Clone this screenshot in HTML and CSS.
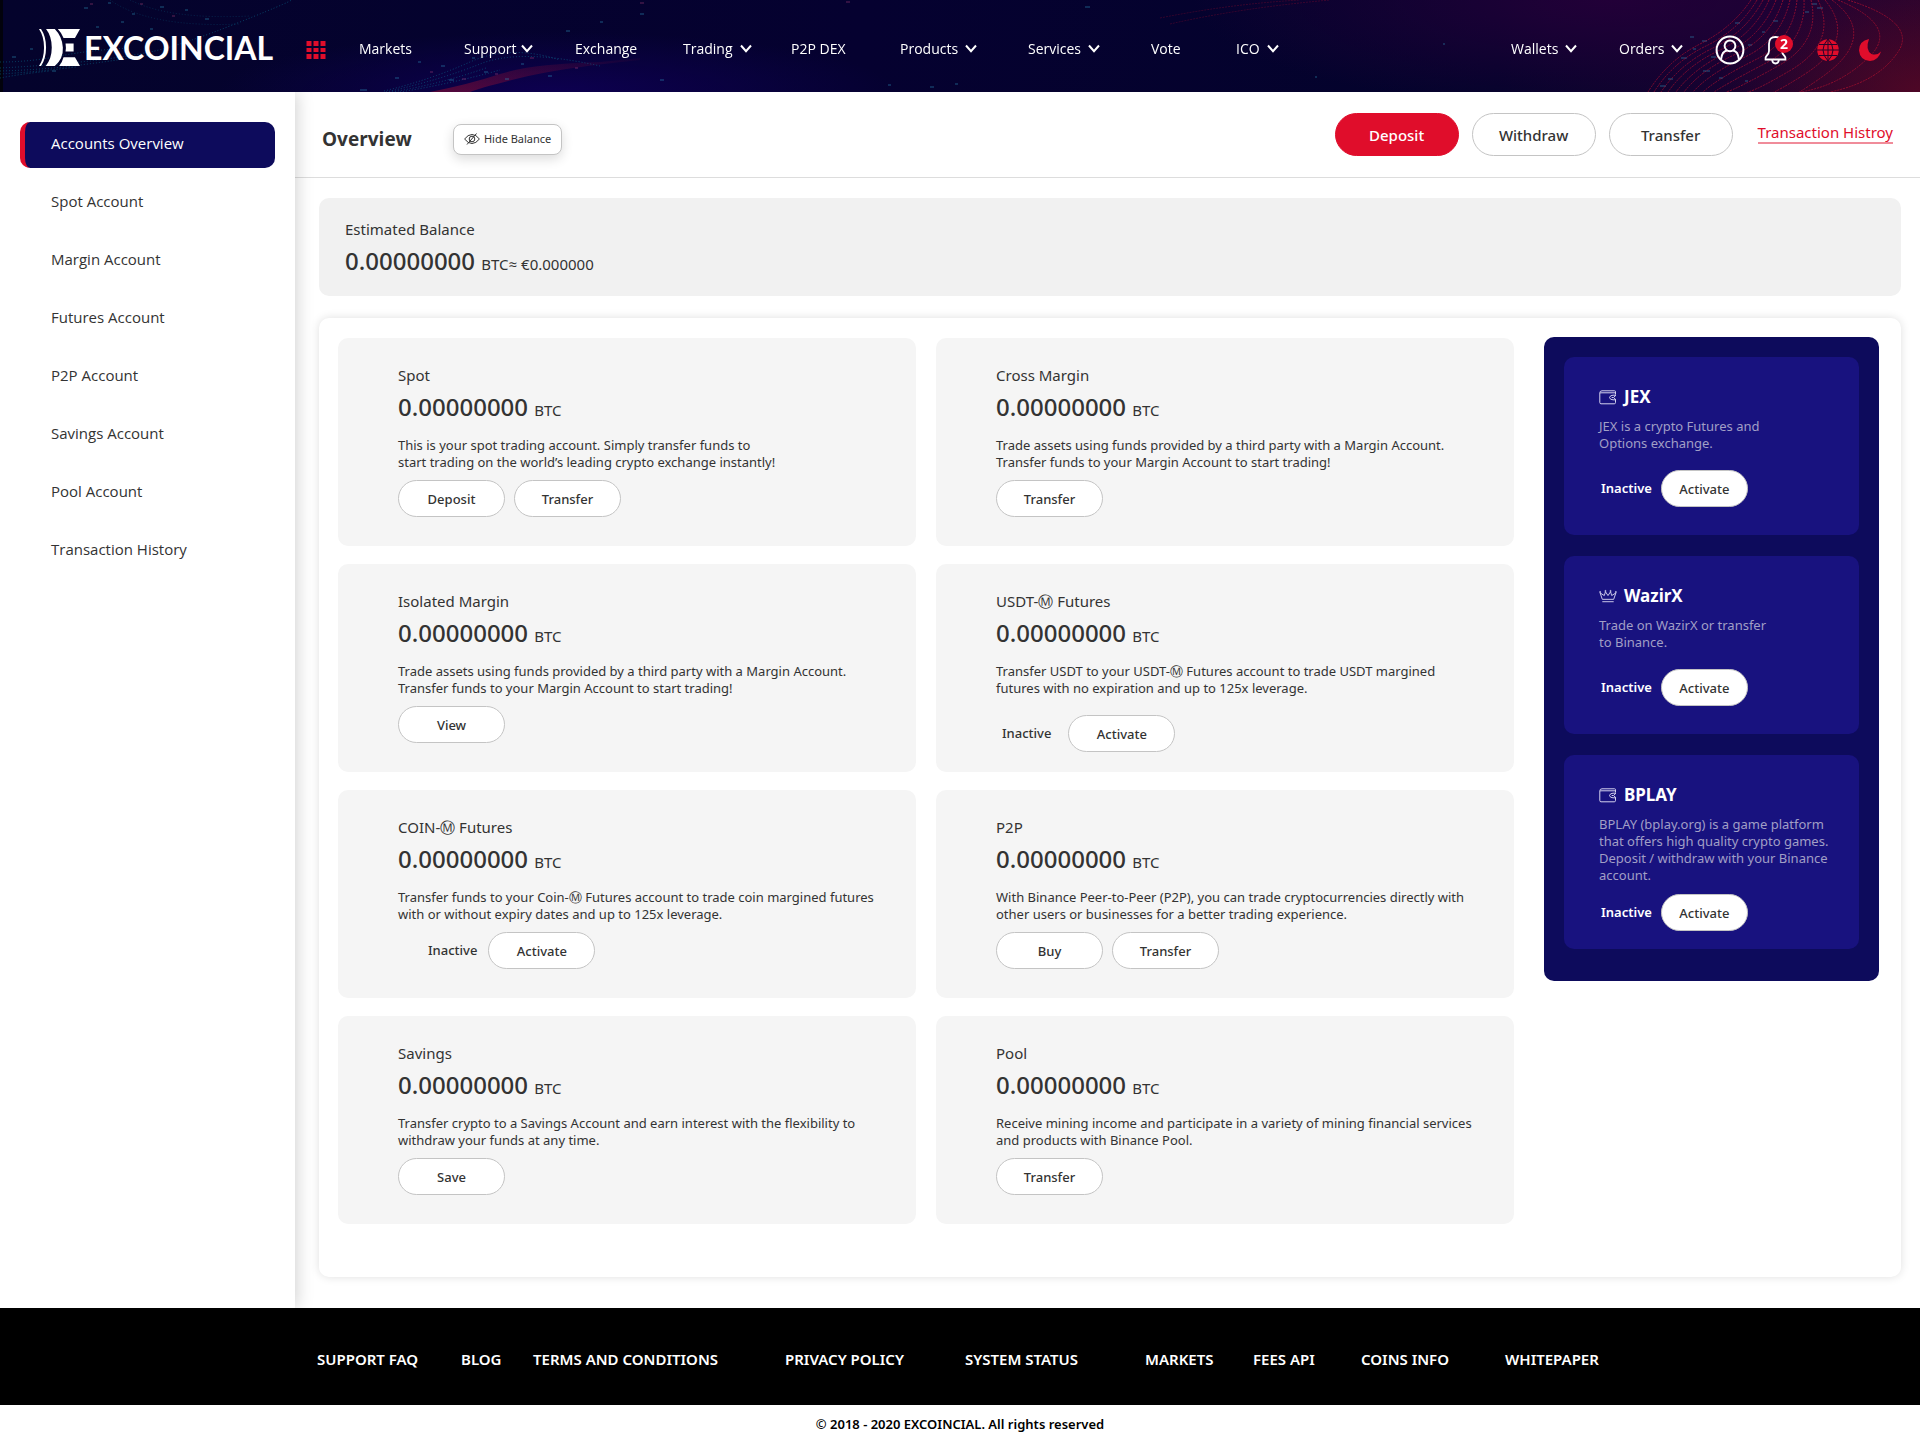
FILE: index.html
```html
<!DOCTYPE html>
<html lang="en">
<head>
<meta charset="utf-8">
<title>Excoincial - Accounts Overview</title>
<meta name="viewport" content="width=device-width, initial-scale=1">
<link rel="stylesheet" href="styles.css">
</head>
<body>
<svg width="0" height="0" class="defs" aria-hidden="true">
  <symbol id="chevron" viewBox="0 0 12 9"><path d="M1 1.5 6 7.2 11 1.5" fill="none" stroke="currentColor" stroke-width="2"/></symbol>
  <symbol id="wallet" viewBox="0 0 18 15">
    <path d="M16.5 4.5V1.5Q16.5.8 15.5.8H3Q.8.8.8 3V12.5Q.8 13.8 2 13.8H15.3Q16.5 13.8 16.5 12.5V10M1 3Q1.5 2.8 3 2.8H16.5M17 5.2H14Q11 5.3 10.5 7.5 11 9.8 14 9.8H17M17 5.2 14.5 7.5 17 9.8M12.7 7.5H14" fill="none" stroke="currentColor" stroke-width="1"/>
  </symbol>
</svg>

<header class="topbar">
  <svg class="topbar-art" viewBox="0 0 1920 92" preserveAspectRatio="xMidYMid slice" aria-hidden="true">
    <defs>
      <linearGradient id="flare" x1="0" x2="1" y1="1" y2="0"><stop offset="0" stop-color="#a01030" stop-opacity=".5"/><stop offset="1" stop-color="#a01030" stop-opacity=".05"/></linearGradient>
    </defs>
    <rect width="3" height="92" fill="#02020c"/>
    <path d="M430 92Q470 84 500 74T600 62L640 58V60Q560 68 520 78T470 92Z" fill="url(#flare)"/>
    <g fill="none" stroke="#0b7fa0" stroke-width="1" stroke-dasharray="1 2" opacity=".55">
      <path d="M0 68Q40 66 80 62T150 52 240 22 290 0"/><path d="M0 71Q40 70 80 65T155 54"/><path d="M0 74Q36 72 76 67"/><path d="M0 62Q30 62 60 56T130 48"/><path d="M0 78Q20 74 50 71"/>
      <path d="M384 91Q430 80 470 62T560 60"/><path d="M386 92Q440 80 480 64T600 66"/><path d="M392 92Q440 84 486 68"/><path d="M400 92Q450 84 500 70"/>
      <path d="M130 0Q170 20 250 16M110 0Q150 28 240 24" opacity=".5"/>
    </g>
    <g fill="none" stroke="#2f9fc4" stroke-width="1" opacity=".55">
      <path d="M84 8h4M108 3h3M132 14h3M160 7h4M121 22h3M185 10h3M96 27h3M205 19h4M150 29h3M12 57h4M30 49h3M52 71h4M360 90h7M395 78h4M418 62h3M441 66h4M449 80h5M472 58h3M484 72h4M505 79h4M521 64h3M548 76h4M566 31h4M600 22h3M640 14h4M660 80h4M1085 7h5M1315 77h2M1443 44h2M888 85h3M930 87h4M955 84h3"/>
      <path d="M1812 4h5M1817 8h6M1805 12h4M1735 23h5M1773 21h5M1702 41h5M1690 37h4M1748 45h4M1681 58h6M1703 71h7M1728 63h4M1668 79h5M1660 86h6M1745 81h3M1719 78h4M1693 49h3M1762 32h3M1711 57h5"/>
    </g>
    <g fill="none" stroke="#c24a80" stroke-width="1" opacity=".5"><path d="M90 4h3M172 16h3M140 4h3M430 72h3M462 79h4M495 74h3M530 58h4M575 68h3M640 3h4M846 2h4"/></g>
    <g fill="none" stroke="#c01430" stroke-width="1" stroke-dasharray="2 1" opacity=".65">
      <path d="M1751 0Q1732 28 1700 44T1648 92"/><path d="M1757 0Q1739 30 1706 46T1654 92"/><path d="M1763 0Q1746 32 1713 48T1661 92"/><path d="M1769 0Q1754 34 1720 50T1668 92"/><path d="M1776 0Q1762 36 1728 52T1676 92"/><path d="M1783 0Q1771 38 1736 54T1684 92"/><path d="M1790 0Q1781 40 1745 57T1693 92"/><path d="M1797 0Q1793 41 1755 60T1703 92"/><path d="M1804 0Q1806 42 1766 63T1714 92"/><path d="M1811 0Q1821 42 1778 66T1726 92"/><path d="M1818 0Q1838 42 1791 70T1740 92"/><path d="M1825 0Q1858 40 1805 74T1756 92"/><path d="M1832 0Q1880 36 1822 77T1776 92"/><path d="M1838 0Q1900 26 1870 56T1800 92"/><path d="M1848 0Q1918 22 1898 52T1830 92"/>
      <path d="M1160 18Q1230 4 1300 0" opacity=".4"/><path d="M1170 24Q1240 8 1330 0" opacity=".4"/>
    </g>
  </svg>

  <a href="#" class="logo">
    <svg viewBox="0 0 122 110" class="logo-mark" aria-hidden="true">
      <path fill="#fff" d="M0 0H6Q21 22 21 55T6 110H0Q15 88 15 55T0 0ZM21 0H47Q69 22 71 55T47 110H20Q38 88 38 55T21 0ZM56 0H122L107 27H73Q66 10 56 0ZM79 43H103V67H79Q81 55 79 43ZM73 84H107L122 110H60Q69 99 73 84Z"/>
    </svg>
    <span class="logo-text">EXCOINCIAL</span>
  </a>
  <button class="icon-btn apps" aria-label="Apps">
    <svg viewBox="0 0 19 18" aria-hidden="true"><path fill="#e00d2b" d="M0 0h5v5H0zM7 0h5v5H7zM14 0h5v5h-5zM0 7h5v4H0zM7 7h5v4H7zM14 7h5v4h-5zM0 13h5v5H0zM7 13h5v5H7zM14 13h5v5h-5z"/></svg>
  </button>
  <nav class="main-nav" aria-label="Main">
    <a href="#">Markets</a>
    <a href="#" class="tight">Support<svg class="chev"><use href="#chevron"/></svg></a>
    <a href="#">Exchange</a>
    <a href="#">Trading<svg class="chev"><use href="#chevron"/></svg></a>
    <a href="#">P2P DEX</a>
    <a href="#">Products<svg class="chev"><use href="#chevron"/></svg></a>
    <a href="#">Services<svg class="chev"><use href="#chevron"/></svg></a>
    <a href="#">Vote</a>
    <a href="#">ICO<svg class="chev"><use href="#chevron"/></svg></a>
    <a href="#">Wallets<svg class="chev"><use href="#chevron"/></svg></a>
    <a href="#">Orders<svg class="chev"><use href="#chevron"/></svg></a>
  </nav>
  <div class="tools">
    <button class="icon-btn user" aria-label="Profile">
      <svg viewBox="0 0 30 30" aria-hidden="true" fill="none" stroke="#fff" stroke-width="2"><circle cx="15" cy="15" r="13.4"/><circle cx="15" cy="10.8" r="5.4"/><path d="M6 24.5Q7 16 12 15.4M24 24.5Q23 16 18 15.4"/></svg>
    </button>
    <button class="icon-btn bell" aria-label="Notifications">
      <svg viewBox="0 0 24 30" aria-hidden="true" fill="none" stroke="#fff" stroke-width="1.8"><path d="M11.5 2Q5 2 5 9V16Q5 19 2.500 21 1 22.500 1.500 24.500H21.500Q22 22.500 20.500 21 18 19 18 16V9Q18 2 11.500 2Z"/><path d="M8.200 25Q8.500 28.500 11.500 28.500T14.800 25"/></svg>
      <span class="badge">2</span>
    </button>
    <button class="icon-btn globe" aria-label="Language">
      <svg viewBox="0 0 22 22" aria-hidden="true"><circle cx="11" cy="11" r="10.800" fill="#e00d2b"/><path d="M11 0V22M0 11H22M2 5.500H20M2 16.500H20M11 0Q1 11 11 22M11 0Q21 11 11 22" fill="none" stroke="#24042c" stroke-width="1"/></svg>
    </button>
    <button class="icon-btn moon" aria-label="Dark mode">
      <svg viewBox="0 0 22 22" aria-hidden="true"><path fill="#e00d2b" d="M10 0Q0 2 0 11.500 1 21.500 11 22 19.500 21.500 22 12.500 18 17 12.500 15 6 11 10 0Z"/></svg>
    </button>
  </div>
</header>

<div class="layout">
  <aside class="sidebar">
    <nav class="side-nav" aria-label="Accounts">
      <a href="#" class="active" aria-current="page">Accounts Overview</a>
      <a href="#">Spot Account</a>
      <a href="#">Margin Account</a>
      <a href="#">Futures Account</a>
      <a href="#">P2P Account</a>
      <a href="#">Savings Account</a>
      <a href="#">Pool Account</a>
      <a href="#">Transaction History</a>
    </nav>
  </aside>

  <main class="content">
    <div class="page-head">
      <h1>Overview</h1>
      <button class="hide-balance">
        <svg viewBox="0 0 16 12" aria-hidden="true" fill="none" stroke="#333" stroke-width="1"><path d="M.6 6Q4 1.500 8 1.500T15.400 6Q12 10.500 8 10.500T.6 6Z"/><circle cx="8" cy="6" r="2.800"/><path d="M3 11.500 12.500.5"/></svg>
        Hide Balance
      </button>
      <div class="head-actions">
        <button class="pill large primary">Deposit</button>
        <button class="pill large">Withdraw</button>
        <button class="pill large">Transfer</button>
        <a href="#" class="history-link">Transaction Histroy</a>
      </div>
    </div>

    <section class="balance">
      <h2>Estimated Balance</h2>
      <p class="amount">0.00000000 <small>BTC≈ €0.000000</small></p>
    </section>

    <div class="panel">
      <div class="accounts">
        <section class="card">
          <h2>Spot</h2>
          <p class="amount">0.00000000 <small>BTC</small></p>
          <p class="desc">This is your spot trading account. Simply transfer funds to<br>start trading on the world’s leading crypto exchange instantly!</p>
          <div class="actions"><button class="pill">Deposit</button><button class="pill">Transfer</button></div>
        </section>
        <section class="card">
          <h2>Cross Margin</h2>
          <p class="amount">0.00000000 <small>BTC</small></p>
          <p class="desc">Trade assets using funds provided by a third party with a Margin Account.<br>Transfer funds to your Margin Account to start trading!</p>
          <div class="actions"><button class="pill">Transfer</button></div>
        </section>
        <section class="card">
          <h2>Isolated Margin</h2>
          <p class="amount">0.00000000 <small>BTC</small></p>
          <p class="desc">Trade assets using funds provided by a third party with a Margin Account.<br>Transfer funds to your Margin Account to start trading!</p>
          <div class="actions"><button class="pill">View</button></div>
        </section>
        <section class="card">
          <h2>USDT-Ⓜ Futures</h2>
          <p class="amount">0.00000000 <small>BTC</small></p>
          <p class="desc">Transfer USDT to your USDT-Ⓜ Futures account to trade USDT margined<br>futures with no expiration and up to 125x leverage.</p>
          <div class="actions spaced"><span class="status">Inactive</span><button class="pill">Activate</button></div>
        </section>
        <section class="card">
          <h2>COIN-Ⓜ Futures</h2>
          <p class="amount">0.00000000 <small>BTC</small></p>
          <p class="desc">Transfer funds to your Coin-Ⓜ Futures account to trade coin margined futures<br>with or without expiry dates and up to 125x leverage.</p>
          <div class="actions indented"><span class="status">Inactive</span><button class="pill">Activate</button></div>
        </section>
        <section class="card">
          <h2>P2P</h2>
          <p class="amount">0.00000000 <small>BTC</small></p>
          <p class="desc">With Binance Peer-to-Peer (P2P), you can trade cryptocurrencies directly with<br>other users or businesses for a better trading experience.</p>
          <div class="actions"><button class="pill">Buy</button><button class="pill">Transfer</button></div>
        </section>
        <section class="card">
          <h2>Savings</h2>
          <p class="amount">0.00000000 <small>BTC</small></p>
          <p class="desc">Transfer crypto to a Savings Account and earn interest with the flexibility to<br>withdraw your funds at any time.</p>
          <div class="actions"><button class="pill">Save</button></div>
        </section>
        <section class="card">
          <h2>Pool</h2>
          <p class="amount">0.00000000 <small>BTC</small></p>
          <p class="desc">Receive mining income and participate in a variety of mining financial services<br>and products with Binance Pool.</p>
          <div class="actions"><button class="pill">Transfer</button></div>
        </section>
      </div>

      <aside class="partners">
        <section class="partner">
          <h2><svg class="partner-icon" aria-hidden="true"><use href="#wallet"/></svg>JEX</h2>
          <p>JEX is a crypto Futures and<br>Options exchange.</p>
          <div class="partner-actions"><span class="status">Inactive</span><button class="pill small">Activate</button></div>
        </section>
        <section class="partner">
          <h2><svg class="partner-icon" viewBox="0 0 19 14" aria-hidden="true" fill="none" stroke="currentColor" stroke-width="1"><path d="M3.500 10 1.200 3.300 5.600 6 6.800 2 9.500 6 12.200 2 13.400 6 17.800 3.300 15.500 10ZM3.500 12.500H15.500"/><circle cx="1.200" cy="2.300" r=".6"/><circle cx="6.800" cy="1.200" r=".6"/><circle cx="12.200" cy="1.200" r=".6"/><circle cx="17.800" cy="2.300" r=".6"/></svg>WazirX</h2>
          <p>Trade on WazirX or transfer<br>to Binance.</p>
          <div class="partner-actions"><span class="status">Inactive</span><button class="pill small">Activate</button></div>
        </section>
        <section class="partner compact">
          <h2><svg class="partner-icon" aria-hidden="true"><use href="#wallet"/></svg>BPLAY</h2>
          <p>BPLAY (bplay.org) is a game platform<br>that offers high quality crypto games.<br>Deposit / withdraw with your Binance<br>account.</p>
          <div class="partner-actions"><span class="status">Inactive</span><button class="pill small">Activate</button></div>
        </section>
      </aside>
    </div>
  </main>
</div>

<footer>
  <nav class="footer-nav" aria-label="Footer">
    <a href="#">SUPPORT FAQ</a>
    <a href="#">BLOG</a>
    <a href="#">TERMS AND CONDITIONS</a>
    <a href="#">PRIVACY POLICY</a>
    <a href="#">SYSTEM STATUS</a>
    <a href="#">MARKETS</a>
    <a href="#">FEES API</a>
    <a href="#">COINS INFO</a>
    <a href="#">WHITEPAPER</a>
  </nav>
  <p class="copyright">© 2018 - 2020 EXCOINCIAL. All rights reserved</p>
</footer>
</body>
</html>
```
FILE: styles.css
```css
:root {
  --red: #e00d2b;
  --navy: #0d0b5c;
  --indigo: #18127f;
  --ink: #333;
}

* { box-sizing: border-box; }

body {
  margin: 0;
  background: #fff;
  color: var(--ink);
  font: 15px/20px "Noto Sans", "Open Sans", "DejaVu Sans", sans-serif;
}

h1, h2, p { margin: 0; }
h2 { font-size: 15px; font-weight: 400; }
a { color: inherit; text-decoration: none; }
button { font: inherit; color: inherit; cursor: pointer; }
.defs { position: absolute; }

/* Top bar */
.topbar {
  position: relative;
  display: flex;
  align-items: center;
  height: 92px;
  padding: 7px 39px 0 39px;
  color: #fff;
  background:
    radial-gradient(ellipse 200px 120px at 100% 100%, rgba(90, 8, 36, .75), transparent),
    radial-gradient(ellipse 420px 110px at 84% 0, #220038, transparent),
    radial-gradient(ellipse 340px 60px at 29% 100%, #0d0050, transparent),
    linear-gradient(90deg, #04032c, #050130 45%, #04032c 78%, #17022f 92%, #28042b);
}
.topbar-art { position: absolute; inset: 0; width: 100%; height: 100%; }
.topbar > :not(.topbar-art) { position: relative; }

.logo { display: flex; align-items: center; gap: 4px; width: 267px; padding-bottom: 4px; }
.logo-mark { width: 41px; height: 37px; }
.logo-text { font: 700 32px/36px Lato, sans-serif; }

.icon-btn { position: relative; display: block; padding: 0; border: 0; background: none; }
.icon-btn svg { display: block; width: 100%; height: 100%; }
.apps { width: 20px; height: 18px; margin-right: 33px; }

.main-nav {
  flex: 1;
  display: grid;
  grid-template-columns: 105fr 111fr 108fr 108fr 109fr 128fr 123fr 85fr 275fr 108fr 96fr;
  padding-bottom: 2px;
  font-family: "Open Sans", sans-serif;
  font-size: 14px;
  white-space: nowrap;
}
.main-nav a { display: flex; align-items: center; gap: 7px; }
.main-nav .tight { gap: 4px; }
.chev { width: 12px; height: 9px; }

.tools { display: flex; align-items: center; }
.user { width: 30px; height: 30px; }
.bell { width: 24px; height: 30px; margin-left: 19px; }
.globe { width: 22px; height: 22px; margin-left: 29px; }
.moon { width: 22px; height: 22px; margin-left: 20px; }
.badge {
  position: absolute;
  top: 0;
  left: 11px;
  width: 18px;
  height: 18px;
  border-radius: 50%;
  background: var(--red);
  font-size: 14px;
  line-height: 18px;
  font-weight: 700;
  text-align: center;
}

/* Layout */
.layout { display: flex; }
.sidebar {
  flex: 0 0 295px;
  position: relative;
  padding: 30px 20px;
  background: #fff;
  box-shadow: 2px 0 16px rgba(0, 0, 0, .18);
  clip-path: inset(0 -24px 0 0);
  font-family: "Open Sans", sans-serif;
}
.side-nav { display: flex; flex-direction: column; gap: 12px; }
.side-nav a { padding: 11px 0 15px 31px; border-radius: 10px; }
.side-nav .active {
  padding-left: 26px;
  border-left: 5px solid var(--red);
  background: var(--navy);
  color: #fff;
}

.content { flex: 1; min-width: 0; padding-bottom: 31px; }

.page-head {
  display: flex;
  align-items: center;
  height: 86px;
  padding: 0 27px;
  border-bottom: 1px solid #ddd;
}
h1 { font: 700 19px/28px "Open Sans", sans-serif; padding-top: 8px; }
.hide-balance {
  display: flex;
  align-items: center;
  gap: 4px;
  height: 31px;
  margin: 9px 0 0 41px;
  padding: 0 10px;
  border: 1px solid #c4c4c4;
  border-radius: 8px;
  background: #fff;
  box-shadow: 0 4px 12px rgba(0, 0, 0, .14);
  font-size: 11px;
}
.hide-balance svg { width: 16px; height: 12px; }
.head-actions { display: flex; align-items: center; gap: 13px; margin-left: auto; }

.pill {
  width: 107px;
  height: 37px;
  padding: 0;
  border: 1px solid #c4c4c4;
  border-radius: 19px;
  background: #fff;
  font-size: 13px;
  font-weight: 500;
}
.pill.large { width: 124px; height: 43px; border-radius: 22px; font-size: 15px; }
.pill.primary { border-color: var(--red); background: var(--red); color: #fff; }
.pill.small { width: 87px; }
.history-link {
  margin: 0 0 4px 12px;
  border-bottom: 2px solid #f08c9a;
  color: var(--red);
}

.balance {
  margin: 20px 19px 22px 24px;
  padding: 21px 26px 18px;
  border-radius: 10px;
  background: #f1f1f1;
}
.amount { margin-top: 5px; font-size: 24px; line-height: 34px; font-weight: 500; }
.amount small { font-size: 15px; line-height: 20px; font-weight: 400; }

.panel {
  display: flex;
  align-items: flex-start;
  gap: 30px;
  margin: 0 19px 0 24px;
  padding: 19px 22px 53px 19px;
  border-radius: 10px;
  background: #fff;
  box-shadow: 0 0 10px rgba(0, 0, 0, .13);
}
.accounts {
  flex: 1;
  display: grid;
  grid-template-columns: 1fr 1fr;
  gap: 18px 20px;
  padding-top: 1px;
}
.card {
  min-height: 208px;
  padding: 27px 20px 20px 60px;
  border-radius: 10px;
  background: #f5f5f5;
}
.desc { margin-top: 13px; font-size: 13px; line-height: 17px; white-space: nowrap; }
.actions { display: flex; align-items: center; gap: 9px; margin-top: 9px; }
.actions.spaced { gap: 17px; margin-top: 18px; padding-left: 6px; }
.actions.indented { gap: 11px; padding-left: 30px; }
.status { padding-bottom: 2px; font-size: 13px; font-weight: 500; }

/* Partner column */
.partners {
  flex: 0 0 335px;
  display: flex;
  flex-direction: column;
  gap: 21px;
  padding: 20px 20px 32px;
  border-radius: 10px;
  background: var(--navy);
}
.partner {
  padding: 28px 20px 28px 35px;
  border-radius: 10px;
  background: var(--indigo);
  color: #fff;
}
.partner h2 {
  display: flex;
  align-items: center;
  gap: 7px;
  font-size: 17px;
  line-height: 24px;
  font-weight: 700;
}
.partner-icon { width: 18px; height: 15px; color: #d4d2ee; }
.partner p { margin-top: 9px; color: #a19fc6; font-size: 13px; line-height: 17px; white-space: nowrap; }
.partner-actions { display: flex; align-items: center; gap: 9px; margin-top: 18px; padding-left: 2px; }
.partner-actions .pill { color: var(--ink); }
.partner-actions .status { font-weight: 600; }
.partner.compact { padding-bottom: 18px; }
.partner.compact .partner-actions { margin-top: 10px; }

/* Footer */
.footer-nav {
  display: grid;
  grid-template-columns: 144fr 72fr 252fr 180fr 180fr 108fr 108fr 144fr 415fr;
  padding: 41px 0 36px 317px;
  background: #000;
  color: #fff;
  font-size: 15px;
  font-weight: 600;
  white-space: nowrap;
}
.copyright { padding: 9px 0 13px; color: #000; font-size: 13px; font-weight: 600; text-align: center; }
```
